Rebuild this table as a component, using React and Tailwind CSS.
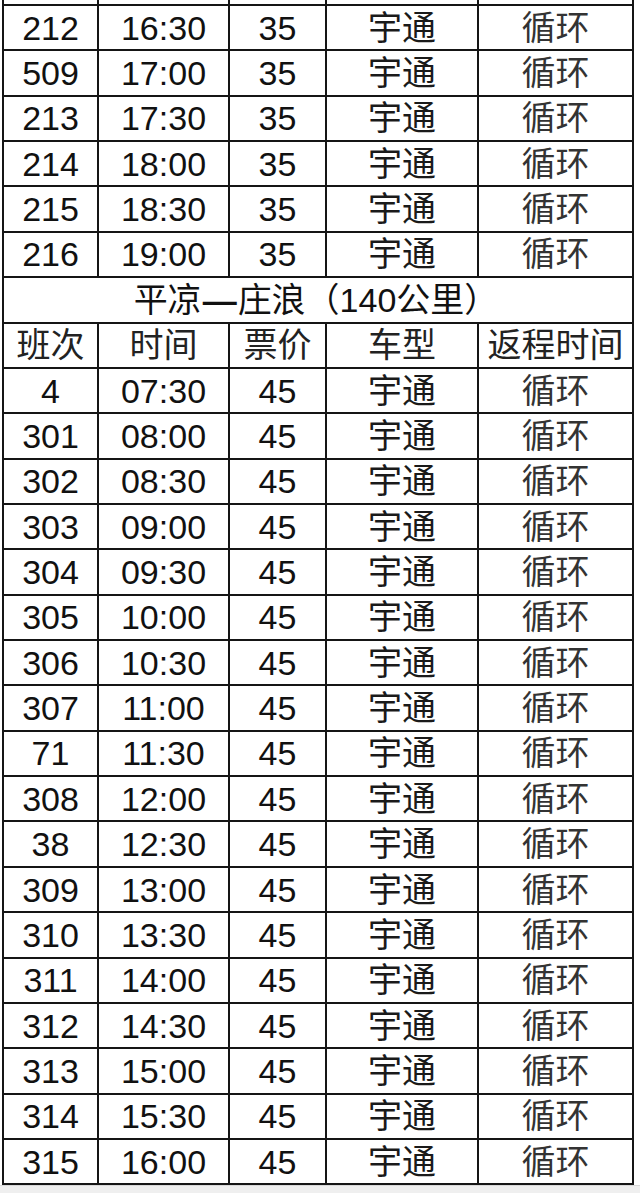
import React from 'react';

const firstRows = [
    ['212', '16:30'],
    ['509', '17:00'],
    ['213', '17:30'],
    ['214', '18:00'],
    ['215', '18:30'],
    ['216', '19:00'],
];

const secondRows = [
    ['4', '07:30'],
    ['301', '08:00'],
    ['302', '08:30'],
    ['303', '09:00'],
    ['304', '09:30'],
    ['305', '10:00'],
    ['306', '10:30'],
    ['307', '11:00'],
    ['71', '11:30'],
    ['308', '12:00'],
    ['38', '12:30'],
    ['309', '13:00'],
    ['310', '13:30'],
    ['311', '14:00'],
    ['312', '14:30'],
    ['313', '15:00'],
    ['314', '15:30'],
    ['315', '16:00'],
];

const headers = ['班次', '时间', '票价', '车型', '返程时间'];

const Cell = ({ children, className = '' }) => (
    <div className={`h-[45.36px] border-r-2 border-b-2 border-[#151515] flex items-center justify-center leading-none ${className}`}>
        {children}
    </div>
);

const Row = ({ no, time, price }) => (
    <>
        <Cell>{no}</Cell>
        <Cell>{time}</Cell>
        <Cell>{price}</Cell>
        <Cell className="text-[#1a1a1a]">宇通</Cell>
        <Cell className="text-[#333]">循环</Cell>
    </>
);

export default function App() {
    return (
        <div className="w-[640px] h-[1193px] bg-white overflow-hidden font-['Liberation_Sans','Noto_Sans_CJK_SC',sans-serif] text-[34px] text-[#111]">
            <div className="ml-[2px] w-[632px] border-l-2 border-[#151515] grid grid-cols-[95px_131px_97px_152px_155px]">
                {/* cut-off top of the table */}
                {[0, 1, 2, 3, 4].map((i) => (
                    <div key={i} className="h-[6px] border-r-2 border-b-2 border-[#151515]" />
                ))}

                {firstRows.map(([no, time]) => (
                    <Row key={no} no={no} time={time} price="35" />
                ))}

                <Cell className="col-span-5 pr-[4px]">
                    <span>平凉<span className="font-bold px-[1px]">—</span>庄浪（140公里）</span>
                </Cell>

                {headers.map((h) => (
                    <Cell key={h} className="text-[#222]">{h}</Cell>
                ))}

                {secondRows.map(([no, time]) => (
                    <Row key={no} no={no} time={time} price="45" />
                ))}
            </div>
            <div className="h-[8px] bg-[#efefef] border-t border-[#d8d8d8]" />
        </div>
    );
}
